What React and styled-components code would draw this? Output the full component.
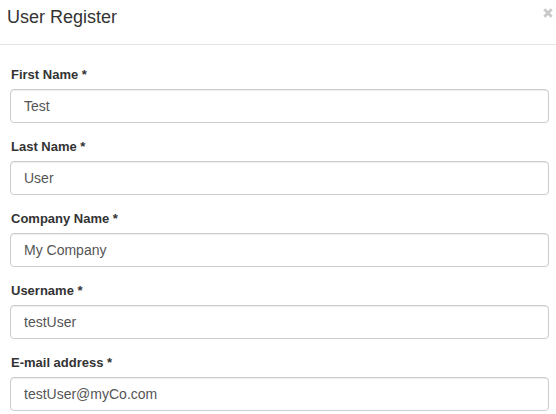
import React from "react";
import styled, { createGlobalStyle } from "styled-components";

const Global = createGlobalStyle`
  html, body { margin: 0; padding: 0; background: #fff; }
  body { font-family: "Liberation Sans", Arial, Helvetica, sans-serif; color: #333; }
  * { box-sizing: border-box; }
`;

const Modal = styled.div`
  width: 556px;
  height: 414px;
  overflow: hidden;
  background: #fff;
`;

const Header = styled.div`
  display: flex;
  justify-content: space-between;
  align-items: flex-start;
  height: 45px;
  padding: 0 3px 0 7px;
  border-bottom: 1px solid #e5e5e5;
`;

const Title = styled.h4`
  margin: 7px 0 0;
  font-size: 18px;
  line-height: 20px;
  font-weight: normal;
  color: #333;
`;

const Close = styled.button`
  display: flex;
  align-items: center;
  justify-content: center;
  width: 10px;
  height: 10px;
  margin-top: 8px;
  padding: 0;
  border: 0;
  background: transparent;
  cursor: pointer;
`;

const Body = styled.form`
  display: flex;
  flex-direction: column;
  gap: 15px;
  padding: 21px 7px 0 10px;
`;

const Group = styled.div`
  display: flex;
  flex-direction: column;
  gap: 5px;
`;

const Label = styled.label`
  font-size: 13px;
  line-height: 18px;
  font-weight: bold;
  color: #333;
  padding-left: 1px;
`;

const Input = styled.input`
  width: 100%;
  height: 34px;
  padding: 6px 12px 6px 13px;
  font-family: "Liberation Sans", Arial, Helvetica, sans-serif;
  font-size: 14px;
  color: #555;
  background: #fff;
  border: 1px solid #ccc;
  border-radius: 4px;
  box-shadow: inset 0 1px 1px rgba(0, 0, 0, 0.075);
  outline: none;
`;

const fields = [
  { id: "first", label: "First Name *", value: "Test" },
  { id: "last", label: "Last Name *", value: "User" },
  { id: "company", label: "Company Name *", value: "My Company" },
  { id: "username", label: "Username *", value: "testUser" },
  { id: "email", label: "E-mail address *", value: "testUser@myCo.com" },
];

export default function App() {
  return (
    <>
      <Global />
      <Modal>
        <Header>
          <Title>User Register</Title>
          <Close type="button" aria-label="Close">
            <svg width="10" height="10" viewBox="0 0 10 10">
              <path d="M1.3 1.3 L8.7 8.7 M8.7 1.3 L1.3 8.7" stroke="#c9c9c9" strokeWidth="2.8" strokeLinecap="butt" />
            </svg>
          </Close>
        </Header>
        <Body>
          {fields.map((f) => (
            <Group key={f.id}>
              <Label htmlFor={f.id}>{f.label}</Label>
              <Input id={f.id} defaultValue={f.value} />
            </Group>
          ))}
        </Body>
      </Modal>
    </>
  );
}
